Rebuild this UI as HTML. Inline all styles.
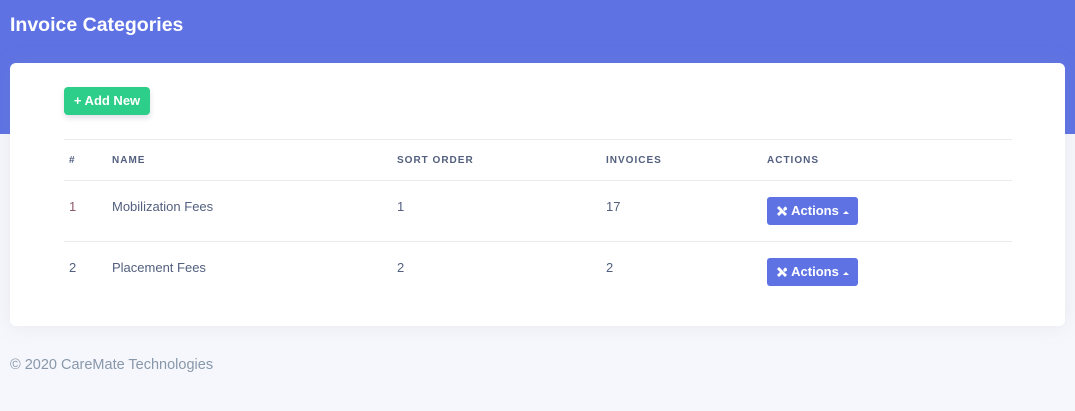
<!DOCTYPE html>
<html><head><meta charset="utf-8"><style>
*{margin:0;padding:0;box-sizing:border-box}
body{width:1075px;height:411px;background:#f6f7fc;font-family:"Liberation Sans",sans-serif;position:relative;overflow:hidden}
.hdr{position:absolute;left:0;top:0;width:1075px;height:134px;background:#5e72e4}
.title{position:absolute;left:10px;top:14px;color:#fff;font-size:19.5px;font-weight:bold}
.card{position:absolute;left:10px;top:63px;width:1055px;height:263px;background:#fff;border-radius:6px;box-shadow:0 0 20px rgba(136,152,170,.15)}
.add{position:absolute;left:64px;top:87px;width:86px;height:28px;background:#2dce89;border-radius:4px;color:#fff;font-size:13px;font-weight:600;line-height:28px;text-align:center;box-shadow:0 3px 6px rgba(50,50,93,.15)}
.line{position:absolute;left:64px;width:948px;height:1px;background:#e9ecef}
.th{position:absolute;top:155px;font-size:10px;font-weight:bold;letter-spacing:1px;color:#525f7f}
.td{position:absolute;font-size:13px;color:#525f7f}
.btn{position:absolute;left:767px;width:91px;height:28px;background:#5e72e4;border-radius:3px;color:#fff;font-size:13px;font-weight:600;line-height:28px;padding-left:9px}
.btn svg{vertical-align:-2px}
.foot{position:absolute;left:10px;top:357px;font-size:14.5px;color:#8898aa}
</style></head><body>
<div class="hdr"></div>
<div class="title">Invoice Categories</div>
<div class="card"></div>
<div class="add">+ Add New</div>
<div class="line" style="top:139px"></div>
<div class="th" style="left:69px">#</div>
<div class="th" style="left:112px">NAME</div>
<div class="th" style="left:397px">SORT ORDER</div>
<div class="th" style="left:606px">INVOICES</div>
<div class="th" style="left:767px">ACTIONS</div>
<div class="line" style="top:180px"></div>
<div class="td" style="left:69px;top:199px;color:#8a5a68">1</div>
<div class="td" style="left:112px;top:199px">Mobilization Fees</div>
<div class="td" style="left:397px;top:199px">1</div>
<div class="td" style="left:606px;top:199px">17</div>
<div class="btn" style="top:197px"><svg width="12" height="12" viewBox="0 0 12 12"><path d="M1 3L3 1L11 9L9 11Z M7 4L9 1.5A2.5 2.5 0 0 1 11 4.5L8.5 6Z M1 9L4 6L6 8L3 11Z" fill="#fff"/></svg> Actions <svg width="8" height="8" viewBox="0 0 8 8"><path d="M1 5L4 2L7 5Z" fill="#fff"/></svg></div>
<div class="line" style="top:241px"></div>
<div class="td" style="left:69px;top:260px">2</div>
<div class="td" style="left:112px;top:260px">Placement Fees</div>
<div class="td" style="left:397px;top:260px">2</div>
<div class="td" style="left:606px;top:260px">2</div>
<div class="btn" style="top:258px"><svg width="12" height="12" viewBox="0 0 12 12"><path d="M1 3L3 1L11 9L9 11Z M7 4L9 1.5A2.5 2.5 0 0 1 11 4.5L8.5 6Z M1 9L4 6L6 8L3 11Z" fill="#fff"/></svg> Actions <svg width="8" height="8" viewBox="0 0 8 8"><path d="M1 5L4 2L7 5Z" fill="#fff"/></svg></div>
<div class="foot">© 2020 CareMate Technologies</div>
</body></html>
